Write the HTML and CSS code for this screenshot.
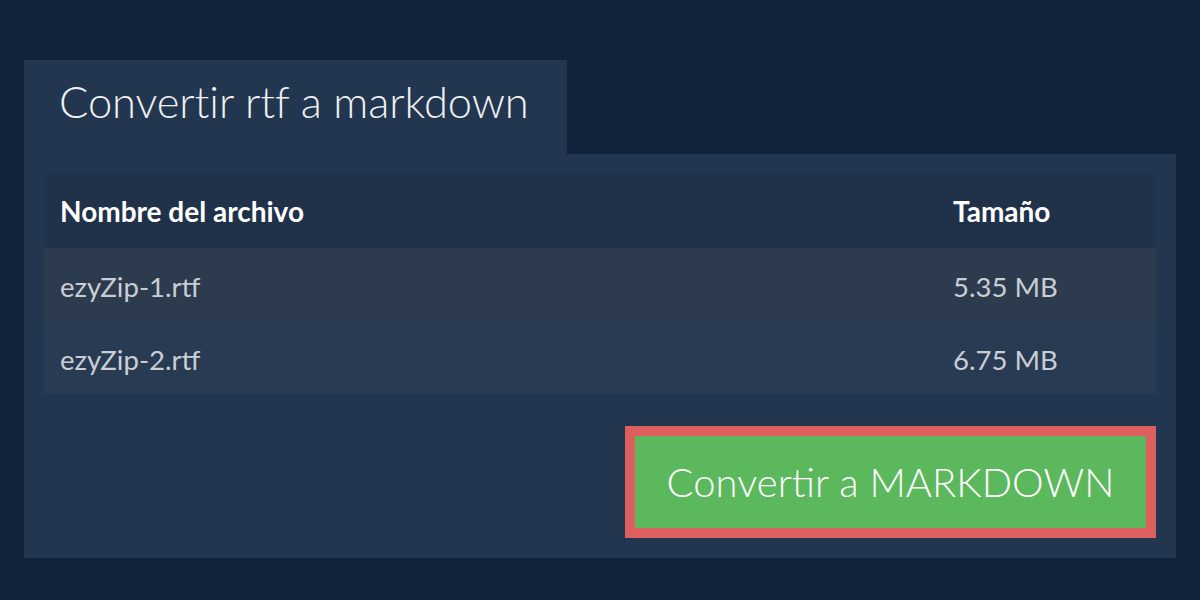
FILE: index.html
```html
<!DOCTYPE html>
<html lang="es">
<head>
<meta charset="utf-8">
<title>Convertir rtf a markdown</title>
<link rel="stylesheet" href="styles.css">
</head>
<body>
<main class="wrap">
  <div class="tab"><h1 class="title">Convertir rtf a markdown</h1></div>
  <section class="panel">
    <table class="files">
      <thead>
        <tr><th class="name">Nombre del archivo</th><th class="size">Tamaño</th></tr>
      </thead>
      <tbody>
        <tr class="r1"><td class="name">ezyZip-1.rtf</td><td class="size">5.35 MB</td></tr>
        <tr class="r2"><td class="name">ezyZip-2.rtf</td><td class="size">6.75 MB</td></tr>
      </tbody>
    </table>
    <div class="actions">
      <button class="convert">Convertir a MARKDOWN</button>
    </div>
  </section>
</main>
</body>
</html>
```

FILE: styles.css
```css
html, body {
  margin: 0;
  padding: 0;
  background: #10233a;
  font-family: Lato, "Open Sans", sans-serif;
}
.wrap {
  padding: 60px 24px 0 24px;
  display: flex;
  flex-direction: column;
  align-items: flex-start;
}
.tab {
  width: 543px;
  height: 94px;
  box-sizing: border-box;
  background: #22364f;
  padding: 0 0 0 35px;
  display: flex;
  align-items: center;
}
.title {
  margin: 0;
  font-weight: 300;
  font-size: 43.5px;
  line-height: 1.2;
  color: #eef0f2;
  position: relative;
  top: -6px;
  letter-spacing: -0.1px;
}
.panel {
  align-self: stretch;
  background: #22364f;
  padding: 20px;
}
.files {
  width: 100%;
  border-collapse: collapse;
}
.files th, .files td {
  text-align: left;
  padding: 0 16px;
  line-height: 34px;
}
.files th {
  height: 74px;
  background: #1f3249;
  color: #ffffff;
  font-weight: 700;
  font-size: 28px;
}
.files td {
  height: 69px;
  color: #c9ced5;
  font-weight: 400;
  font-size: 27.5px;
  padding-top: 4px;
}
.files .size {
  width: 187px;
}
.r1 { background: #2c3b4d; }
.r2 { background: #283b52; }
.actions {
  display: flex;
  justify-content: flex-end;
  margin-top: 32px;
}
.convert {
  width: 531px;
  height: 112px;
  background: #5cb85c;
  border: 10px solid #dd605f;
  color: #ffffff;
  font-family: Lato, "Open Sans", sans-serif;
  font-weight: 300;
  font-size: 40px;
  padding: 0;
  cursor: pointer;
}
```
